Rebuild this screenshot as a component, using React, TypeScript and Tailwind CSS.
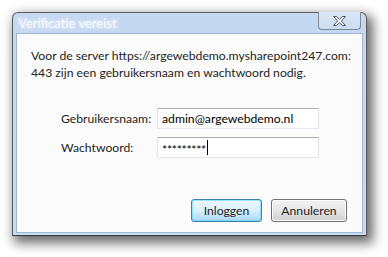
import React from 'react';

const CloseGlyph: React.FC = () => (
  <svg width="15" height="12" viewBox="0 0 15 12" className="block">
    <path
      d="M1.5 1.5 L4.5 1.5 L7.5 4.3 L10.5 1.5 L13.5 1.5 L9.3 6 L13.5 10.5 L10.5 10.5 L7.5 7.7 L4.5 10.5 L1.5 10.5 L5.7 6 Z"
      fill="#ffffff"
      stroke="#4b5563"
      strokeWidth="1"
      strokeLinejoin="round"
    />
  </svg>
);

const Field: React.FC<{ label: string; children: React.ReactNode }> = ({ label, children }) => (
  <div className="flex items-center">
    <label className="w-[96px] whitespace-nowrap text-[#1e1e1e]">{label}</label>
    <div className="w-[162px] h-[21px] flex items-center pl-[4px] bg-white border border-[#e2e3ea] border-t-[#abadb3] border-b-[#e3e9ef]">
      {children}
    </div>
  </div>
);

export default function App() {
  return (
    <div className="w-[388px] h-[257px] bg-white pt-[12px] pl-[12px] font-['Segoe_UI','Lato',sans-serif] text-[12.2px] leading-[17px]">
      <div className="w-[355px] h-[224px] flex flex-col border border-[#5b5b5b] border-b-[#3a3a3a] rounded-t-[6px] bg-gradient-to-b from-[#c4d8f1] to-[#cadcf2] px-[3px] pb-[2px] shadow-[4px_5px_12px_2px_rgba(0,0,0,0.6)]">
        <div className="h-[20px] shrink-0 flex items-start justify-between">
          <span className="pl-[2px] pt-[2px] text-[13px] text-[#f5f9fe] [text-shadow:0_0_4px_#ffffff]">Verificatie vereist</span>
          <button className="-mt-[1px] mr-[2px] w-[43px] h-[18px] flex items-center justify-center rounded-b-[4px] border border-t-0 border-[#7c8797] bg-gradient-to-b from-[#dbe7f6] to-[#cbdcf1]">
            <CloseGlyph />
          </button>
        </div>
        <div className="flex-1 flex flex-col border border-[#9fb6d2] bg-[#fbfbfb] text-[#1e1e1e]">
          <p className="pt-[13px] pl-[14px] whitespace-nowrap">
            Voor de server https://argewebdemo.mysharepoint247.com:
            <br />
            443 zijn een gebruikersnaam en wachtwoord nodig.
          </p>
          <div className="mt-[27px] pl-[44px] flex flex-col gap-[8px]">
            <Field label="Gebruikersnaam:">
              <span className="text-[#000]">admin@argewebdemo.nl</span>
            </Field>
            <Field label="Wachtwoord:">
              <span className="text-[#000] tracking-[-0.3px] mt-[3px]">*********</span>
              <span className="ml-[1px] w-[1px] h-[15px] bg-black" />
            </Field>
          </div>
          <div className="mt-auto mb-[10px] pr-[15px] flex justify-end gap-[9px]">
            <button className="w-[71px] h-[23px] rounded-[3px] border border-[#3c7fb1] bg-gradient-to-b from-[#eaf6fd] via-[#d9f0fc] to-[#a7d9f5] shadow-[inset_0_0_0_1px_#48d4ff80] text-[#1e1e1e]">
              Inloggen
            </button>
            <button className="w-[76px] h-[23px] rounded-[3px] border border-[#707070] bg-gradient-to-b from-[#f2f2f2] via-[#e6e6e6] to-[#d0d0d0] shadow-[inset_0_0_0_1px_#fcfcfc] text-[#1e1e1e]">
              Annuleren
            </button>
          </div>
        </div>
      </div>
    </div>
  );
}
